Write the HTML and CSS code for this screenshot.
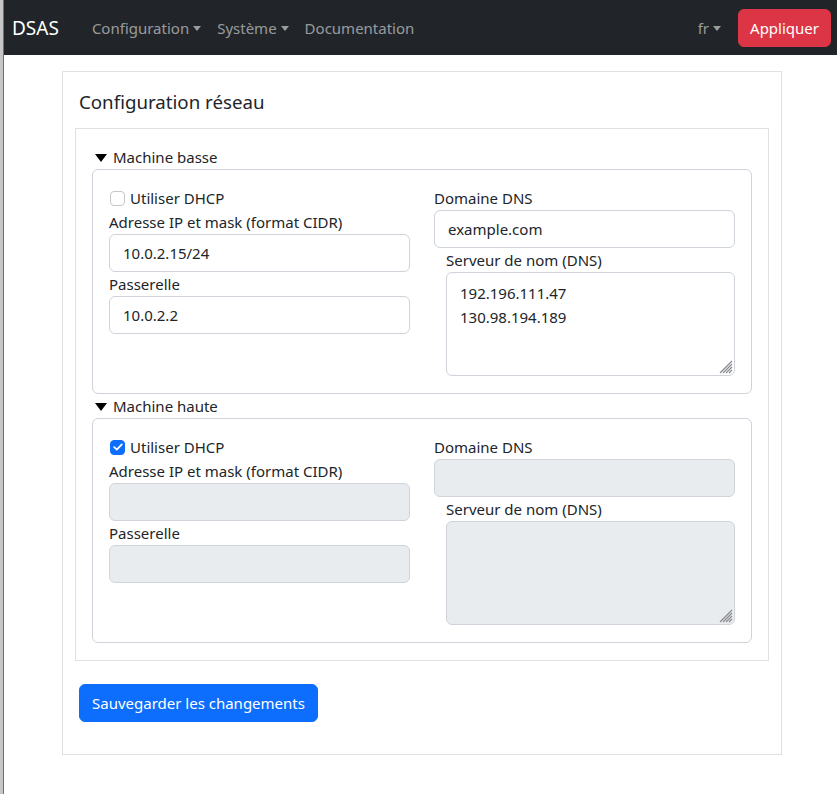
FILE: index.html
```html
<!DOCTYPE html>
<html lang="fr">
<head>
<meta charset="utf-8">
<title>DSAS</title>
<link rel="stylesheet" href="styles.css">
</head>
<body>
<div class="frame">
  <nav class="navbar">
    <a class="brand">DSAS</a>
    <ul class="nav">
      <li class="nav-link dropdown">Configuration</li>
      <li class="nav-link dropdown">Système</li>
      <li class="nav-link">Documentation</li>
    </ul>
    <div class="nav-right">
      <span class="nav-link dropdown">fr</span>
      <button class="btn btn-danger">Appliquer</button>
    </div>
  </nav>

  <main class="card">
    <h5 class="card-title">Configuration réseau</h5>
    <div class="box">
      <details open>
        <summary><svg class="tri" width="12" height="8" viewBox="0 0 12 8"><path d="M0 0H12L6 8Z" fill="#000"/></svg>Machine basse</summary>
        <fieldset class="group">
          <div class="col">
            <label class="check"><span class="cb"></span>Utiliser DHCP</label>
            <label class="lbl">Adresse IP et mask (format CIDR)</label>
            <input class="input" value="10.0.2.15/24">
            <label class="lbl">Passerelle</label>
            <input class="input" value="10.0.2.2">
          </div>
          <div class="col">
            <label class="lbl">Domaine DNS</label>
            <input class="input" value="example.com">
            <div class="sub">
              <label class="lbl">Serveur de nom (DNS)</label>
              <div class="area-wrap">
                <textarea class="input area">192.196.111.47
130.98.194.189</textarea>
                <svg class="grip" width="15" height="15" viewBox="0 0 15 15"><path d="M14 2L2 14M14 5L5 14M14 8L8 14M14 11L11 14" stroke="#8a8a8a" stroke-width="1.2" fill="none"/></svg>
              </div>
            </div>
          </div>
        </fieldset>
      </details>
      <details open>
        <summary><svg class="tri" width="12" height="8" viewBox="0 0 12 8"><path d="M0 0H12L6 8Z" fill="#000"/></svg>Machine haute</summary>
        <fieldset class="group">
          <div class="col">
            <label class="check"><span class="cb checked"><svg width="10" height="8" viewBox="0 0 10 8"><path d="M1.2 4.2L3.8 6.6L8.8 1.4" fill="none" stroke="#fff" stroke-width="1.8" stroke-linecap="round" stroke-linejoin="round"/></svg></span>Utiliser DHCP</label>
            <label class="lbl">Adresse IP et mask (format CIDR)</label>
            <input class="input" disabled>
            <label class="lbl">Passerelle</label>
            <input class="input" disabled>
          </div>
          <div class="col">
            <label class="lbl">Domaine DNS</label>
            <input class="input" disabled>
            <div class="sub">
              <label class="lbl">Serveur de nom (DNS)</label>
              <div class="area-wrap">
                <textarea class="input area" disabled></textarea>
                <svg class="grip" width="15" height="15" viewBox="0 0 15 15"><path d="M14 2L2 14M14 5L5 14M14 8L8 14M14 11L11 14" stroke="#8a8a8a" stroke-width="1.2" fill="none"/></svg>
              </div>
            </div>
          </div>
        </fieldset>
      </details>
    </div>
    <button class="btn btn-primary save">Sauvegarder les changements</button>
  </main>
</div>
</body>
</html>
```
FILE: styles.css
```css
* { box-sizing: border-box; }
html, body { margin: 0; padding: 0; }
body {
  font-family: "Noto Sans", "Open Sans", sans-serif;
  font-size: 15px;
  line-height: 24px;
  color: #212529;
  background: #fff;
}
.frame {
  min-height: 794px;
  border-left: 3px solid #c6c6c6;
  position: relative;
}
.frame::before {
  content: "";
  position: absolute;
  left: 0; top: 0; bottom: 0;
  width: 1px;
  background: #6e6e6e;
}
.navbar {
  height: 55px;
  background: #212529;
  display: flex;
  align-items: center;
  padding: 0 6px 0 9px;
}
.brand {
  color: #fff;
  font-size: 19px;
  margin-right: 24px;
}
.nav {
  display: flex;
  list-style: none;
  margin: 0;
  padding: 0 0 0 1px;
  gap: 0;
}
.nav-link {
  color: rgba(255,255,255,0.55);
  padding: 8px 8px;
}
.dropdown::after {
  content: "";
  display: inline-block;
  margin-left: 4px;
  vertical-align: 3px;
  border-top: 5px solid;
  border-left: 4px solid transparent;
  border-right: 4px solid transparent;
}
.nav-right {
  margin-left: auto;
  display: flex;
  align-items: center;
  gap: 9px;
}
.btn {
  font-family: inherit;
  font-size: 15px;
  line-height: 24px;
  border: 1px solid transparent;
  border-radius: 6px;
  padding: 6px 12px;
  color: #fff;
}
.btn-danger { background: #dc3545; border-color: #dc3545; padding: 6px 11px; }
.btn-primary { background: #0d6efd; border-color: #0d6efd; }

.card {
  width: 720px;
  margin: 16px 0 0 59px;
  border: 1px solid #dee2e6;
  padding: 16px 12px 16px 12px;
}
.card-title {
  font-size: 18.7px;
  font-weight: 400;
  line-height: 24px;
  margin: 2px 0 14px 4px;
}
.box {
  border: 1px solid #dee2e6;
  padding: 16px 16px 17px 16px;
}
summary {
  list-style: none;
  display: flex;
  align-items: center;
  padding-left: 3px;
}
summary::-webkit-details-marker { display: none; }
.tri { margin-right: 6px; margin-top: 1px; }
.group {
  margin: 0;
  border: 1px solid #ced4da;
  border-radius: 6px;
  padding: 16px 16px 17px 16px;
  display: grid;
  grid-template-columns: 301px 301px;
  column-gap: 24px;
  min-width: 0;
}
.col { display: flex; flex-direction: column; }
.check { display: flex; align-items: center; }
.cb {
  width: 15px; height: 15px;
  border: 1px solid #c4c8cc;
  border-radius: 4px;
  margin: 0 5px 0 1px;
  display: inline-flex;
  align-items: center;
  justify-content: center;
}
.cb.checked { background: #0d6efd; border-color: #0d6efd; }
.lbl { display: block; }
.input {
  font-family: inherit;
  font-size: 15px;
  line-height: 24px;
  color: #212529;
  height: 38px;
  width: 100%;
  border: 1px solid #ced4da;
  border-radius: 6px;
  padding: 6px 13px;
  background: #fff;
  margin: 0;
}
.input:disabled { background: #e9ecef; }
.sub { margin-left: 12px; display: flex; flex-direction: column; }
.area-wrap { position: relative; }
.area {
  height: 104px;
  padding: 8px 13px;
  resize: none;
  display: block;
}
.grip {
  position: absolute;
  right: 2px;
  bottom: 2px;
}
.save {
  margin: 23px 0 16px 4px;
}
```
